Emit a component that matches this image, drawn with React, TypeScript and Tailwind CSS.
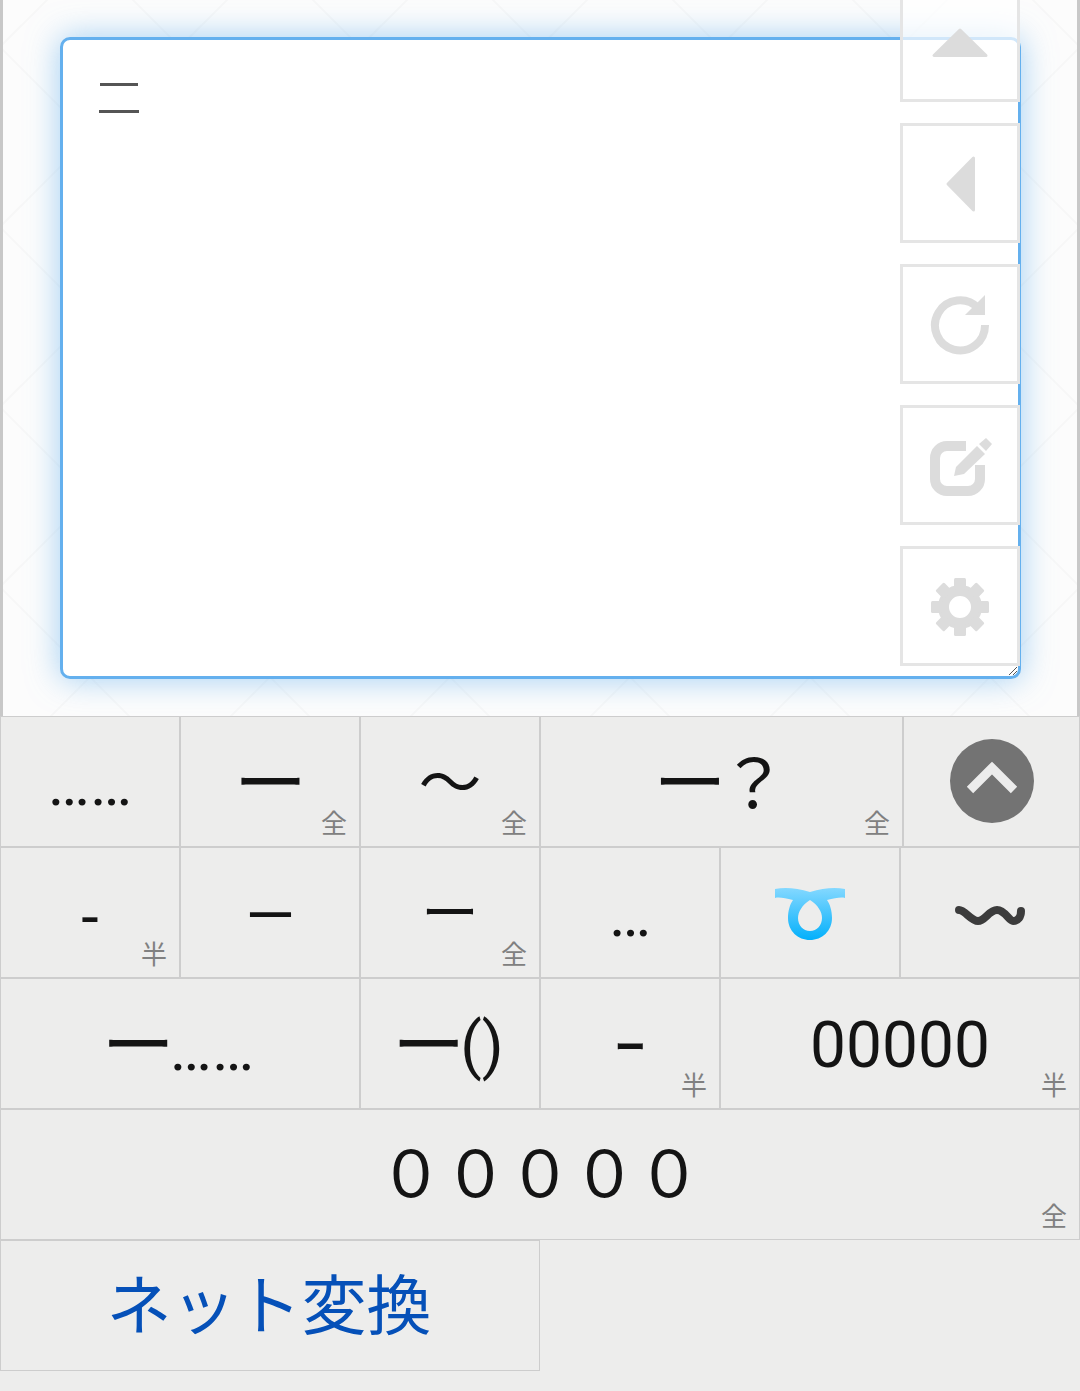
import type { ReactNode } from 'react';

const cjk = 'font-["Noto_Sans_CJK_JP",sans-serif]';
const roboto = 'font-["Roboto",sans-serif]';

type KeyDef = {
  content: ReactNode;
  tag?: '全' | '半';
};

// long bar used on several keys, sits in a full-width slot
function LongDash() {
  return (
    <span className={`w-[64px] flex justify-start text-[73px] leading-none tracking-[-9px] -translate-x-[4px] -translate-y-[4px] ${cjk}`}>
      ー
    </span>
  );
}

const row1: KeyDef[] = [
  { content: <span className={`${roboto} translate-y-[2px]`}>……</span> },
  { content: <LongDash />, tag: '全' },
  { content: <span className={`${cjk} -translate-y-[4px]`}>〜</span>, tag: '全' },
  {
    content: (
      <>
        <LongDash />
        <span className={`w-[64px] flex justify-center text-[68px] leading-none -translate-y-[2px] ${cjk}`}>？</span>
      </>
    ),
    tag: '全',
  },
  { content: <CollapseIcon /> },
];

const row2: KeyDef[] = [
  { content: <span className={`${roboto} translate-y-[5px]`}>-</span>, tag: '半' },
  { content: <span className={`${roboto} translate-y-[3px]`}>—</span> },
  { content: <span className={`${cjk} text-[58px] -translate-y-[4px]`}>ー</span>, tag: '全' },
  { content: <span className={`${roboto} translate-y-[2px]`}>…</span> },
  { content: <LoopIcon /> },
  { content: <WaveIcon /> },
];

const row3: KeyDef[] = [
  {
    content: (
      <>
        <LongDash />
        <span className={`${roboto} translate-y-[5px]`}>……</span>
      </>
    ),
  },
  {
    content: (
      <>
        <LongDash />
        <span className={`${roboto} translate-y-[2px]`}>()</span>
      </>
    ),
  },
  { content: <span className={`${cjk} -translate-y-[2px]`}>ｰ</span>, tag: '半' },
  { content: <span className={`${roboto} text-[64px] translate-y-[2px]`}>00000</span>, tag: '半' },
];

function LoopIcon() {
  return (
    <svg width="70" height="54" viewBox="0 0 70 54">
      <defs>
        <linearGradient id="loopFill" x1="0" y1="0" x2="0" y2="1">
          <stop offset="0" stopColor="#84d8ff" />
          <stop offset="1" stopColor="#03b0fb" />
        </linearGradient>
      </defs>
      <path
        fill="url(#loopFill)"
        fillRule="evenodd"
        d="M0 3C10 1 22 2 35 6C48 2 60 1 70 3V12C66 11 60 12 52 14C55 18 57 25 57 32C57 45 47 54 35 54C23 54 13 45 13 32C13 25 15 18 18 14C10 12 4 11 0 12ZM35 14C27 19 23 26 23 32C23 39 28 45 35 45C42 45 47 39 47 32C47 26 43 19 35 14Z"
      />
    </svg>
  );
}

function WaveIcon() {
  return (
    <svg className="translate-y-[3px]" width="70" height="24" viewBox="0 0 70 24" fill="none">
      <path
        d="M4 6C10 6 16 17 23 17C30 17 34 6 42 6C50 6 54 17 58 17C63 17 66 13 66 7"
        stroke="#3c3c3c"
        strokeWidth="8"
        strokeLinecap="round"
      />
    </svg>
  );
}

function CollapseIcon() {
  return (
    <div className="w-[84px] h-[84px] rounded-full bg-[#737373] flex items-center justify-center -translate-y-[1px]">
      <svg width="84" height="84" viewBox="0 0 84 84" fill="none">
        <path d="M20 51L42 29L64 51" stroke="#ececec" strokeWidth="9" />
      </svg>
    </div>
  );
}

function Key({ def }: { def: KeyDef }) {
  return (
    <div className="relative h-[131px] border border-[#cdcdcd] flex items-center justify-center text-[#141414] text-[63px] leading-none whitespace-nowrap">
      {def.content}
      {def.tag && (
        <span className={`absolute right-[12px] bottom-[9px] text-[26px] leading-[30px] text-[#808080] ${cjk}`}>
          {def.tag}
        </span>
      )}
    </div>
  );
}

function SideButton({ children }: { children: ReactNode }) {
  return (
    <div className="w-[120px] h-[120px] border-[3px] border-[#e5e5e5] bg-white/70 flex items-center justify-center">
      {children}
    </div>
  );
}

const icon = '#dcdcdc';

export default function App() {
  return (
    <div className="w-[1080px] min-h-[1391px] bg-[#ededec] overflow-hidden">
      {/* text area with the tool buttons */}
      <div className="relative h-[716px] bg-[#fcfcfc] border-x-[3px] border-[#c8c8c8] overflow-hidden">
        <svg className="absolute top-0 left-[-3px]" width="1080" height="716">
          <defs>
            <pattern id="lattice" width="180" height="180" patternUnits="userSpaceOnUse" patternTransform="translate(0 47)">
              <path d="M0 0L180 180M180 0L0 180" stroke="#f7f7f7" strokeWidth="2" fill="none" />
            </pattern>
          </defs>
          <rect width="1080" height="716" fill="url(#lattice)" />
        </svg>

        <div className="absolute left-[57px] top-[37px] w-[961px] h-[642px] bg-white border-[3px] border-[#64b0ee] rounded-[10px] shadow-[0_0_32px_rgba(100,176,238,0.6)]">
          <svg className="absolute left-[36px] top-[43px]" width="40" height="30">
            <rect x="1" y="0" width="38" height="3" fill="#555555" />
            <rect x="0" y="27" width="40" height="3" fill="#555555" />
          </svg>
          <svg className="absolute right-[0px] bottom-[0px]" width="10" height="10" fill="none" stroke="#555555">
            <path d="M1 9L9 1M5 9L9 5" />
          </svg>
        </div>

        <div className="absolute left-[897px] top-[-18px] flex flex-col gap-[21px]">
          <SideButton>
            <svg width="64" height="64" viewBox="0 0 64 64">
              <polygon points="32,20 6,45.5 58,45.5" fill={icon} stroke={icon} strokeWidth="3" strokeLinejoin="round" />
            </svg>
          </SideButton>
          <SideButton>
            <svg width="64" height="64" viewBox="0 0 64 64">
              <polygon points="20,33 45.5,7 45.5,59" fill={icon} stroke={icon} strokeWidth="3" strokeLinejoin="round" />
            </svg>
          </SideButton>
          <SideButton>
            <svg width="64" height="64" viewBox="0 0 64 64" fill="none">
              <path d="M50 16A25 25 0 1 0 57 33" stroke={icon} strokeWidth="8" />
              <polygon points="57,3 57,23 37,23" fill={icon} />
            </svg>
          </SideButton>
          <SideButton>
            <svg width="64" height="64" viewBox="0 0 64 64" fill="none">
              <path d="M38 13H19A12 12 0 0 0 7 25V46A12 12 0 0 0 19 58H40A12 12 0 0 0 52 46V32" stroke={icon} strokeWidth="10" />
              <polygon points="26,43 28,34 49,13 57,21 36,41" fill={icon} />
              <polygon points="51,11 58,5 64,11 58,18" fill={icon} />
            </svg>
          </SideButton>
          <SideButton>
            <svg className="translate-y-[1px]" width="64" height="64" viewBox="0 0 64 64" fill="none">
              <circle cx="32" cy="32" r="16.5" stroke={icon} strokeWidth="11" />
              {[0, 45, 90, 135, 180, 225, 270, 315].map(a => (
                <rect key={a} x="26" y="3" width="12" height="12" rx="1.5" fill={icon} transform={`rotate(${a} 32 32)`} />
              ))}
            </svg>
          </SideButton>
        </div>
      </div>

      {/* keyboard suggestion rows */}
      <div className="grid grid-cols-[180px_180px_180px_363px_177px]">
        {row1.map((k, i) => <Key key={i} def={k} />)}
      </div>
      <div className="grid grid-cols-6">
        {row2.map((k, i) => <Key key={i} def={k} />)}
      </div>
      <div className="grid grid-cols-[360px_180px_180px_360px]">
        {row3.map((k, i) => <Key key={i} def={k} />)}
      </div>
      <Key def={{ content: <span className={`${cjk} text-[64.5px] -translate-y-[5px]`}>０００００</span>, tag: '全' }} />
      <div className="w-[540px]">
        <div className={`h-[131px] border border-[#cdcdcd] flex items-center justify-center text-[65px] leading-none text-[#0550b8] ${cjk}`}>
          <span className="-translate-y-[4px] -translate-x-[1px]">ネット変換</span>
        </div>
      </div>
    </div>
  );
}
